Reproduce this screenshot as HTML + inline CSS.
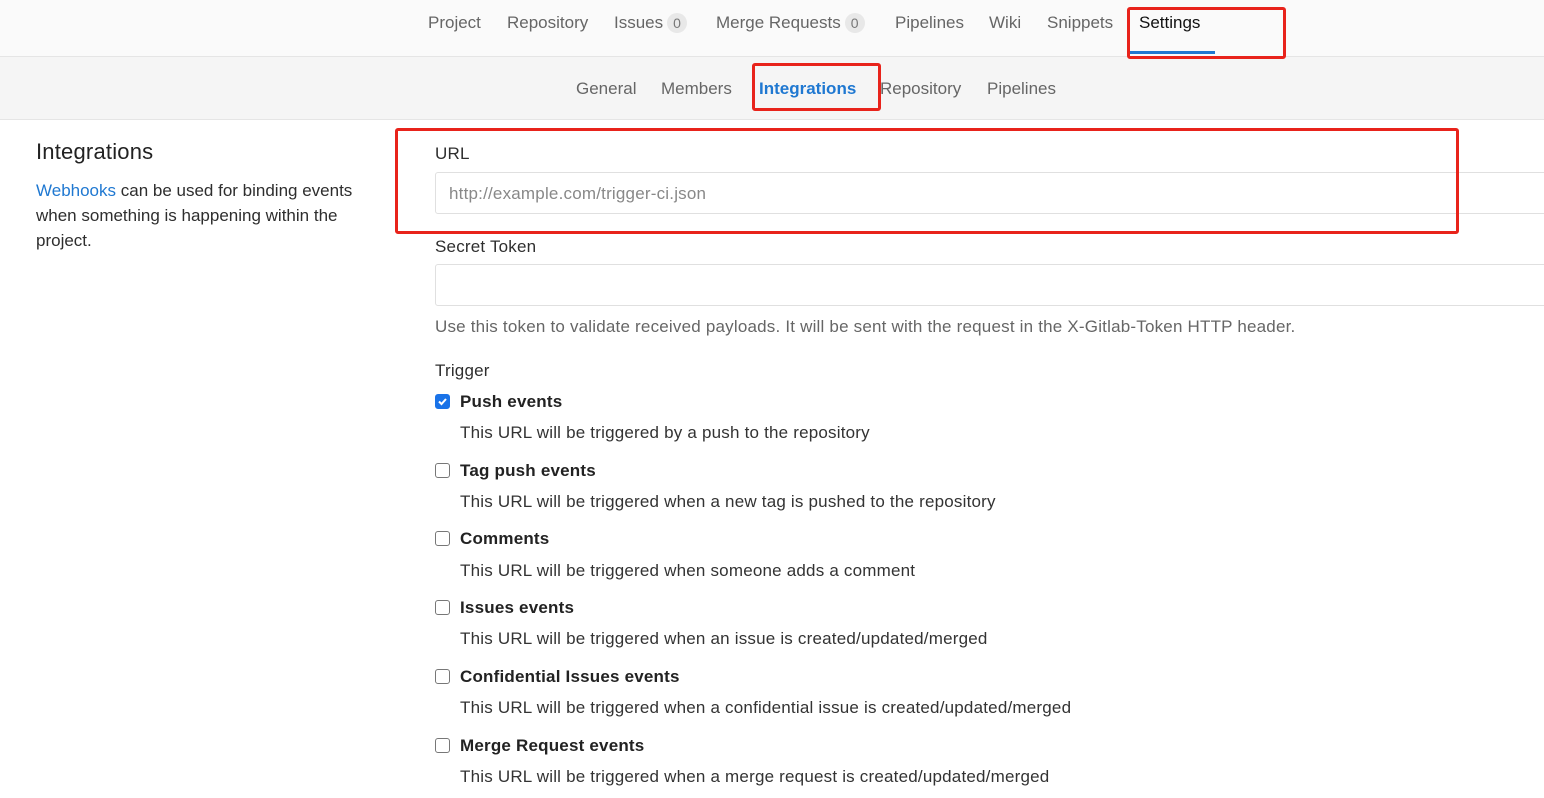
<!DOCTYPE html>
<html><head><style>
body{margin:0;width:1544px;height:798px;overflow:hidden;background:#fff;font-family:"Liberation Sans",sans-serif;font-size:17px;color:#2e2e2e;position:relative;letter-spacing:0.2px}
.a{position:absolute;white-space:nowrap}
.n{color:#666}
.badge{display:inline-block;background:#e8e8e8;border-radius:10px;padding:0 6px;font-size:14px;color:#777;line-height:20px;margin-left:4px}
.red{position:absolute;border:3px solid #e8231b;border-radius:3px;box-sizing:border-box}
.cb{position:absolute;left:435px;width:15px;height:15px;border:1px solid #777;border-radius:3px;box-sizing:border-box;background:#fff}
.lbl{left:460px;font-weight:bold;color:#222}
.d{left:460px;color:#333}
.inp{position:absolute;left:435px;width:1120px;height:42px;border:1px solid #e0e0e0;border-radius:3px;box-sizing:border-box}
</style></head><body>
<div class="a" style="left:0;top:0;width:1544px;height:56px;background:#fafafa;border-bottom:1px solid #e5e5e5"></div>
<div class="a" style="left:0;top:57px;width:1544px;height:62px;background:#f5f5f5;border-bottom:1px solid #e5e5e5"></div>
<div class="a n" style="left:428px;top:13px;letter-spacing:0">Project</div>
<div class="a n" style="left:507px;top:13px;letter-spacing:0">Repository</div>
<div class="a n" style="left:614px;top:13px;letter-spacing:0">Issues<span class="badge">0</span></div>
<div class="a n" style="left:716px;top:13px;letter-spacing:0">Merge Requests<span class="badge">0</span></div>
<div class="a n" style="left:895px;top:13px;letter-spacing:0">Pipelines</div>
<div class="a n" style="left:989px;top:13px;letter-spacing:0">Wiki</div>
<div class="a n" style="left:1047px;top:13px;letter-spacing:0">Snippets</div>
<div class="a" style="left:1139px;top:13px;color:#111;letter-spacing:0">Settings</div>
<div class="a" style="left:1130px;top:51px;width:85px;height:3px;background:#1f78d1"></div>
<div class="red" style="left:1127px;top:7px;width:159px;height:52px"></div>
<div class="a n" style="left:576px;top:79px;letter-spacing:0">General</div>
<div class="a n" style="left:661px;top:79px;letter-spacing:0">Members</div>
<div class="a" style="left:759px;top:79px;color:#1f78d1;font-weight:bold;letter-spacing:0">Integrations</div>
<div class="a n" style="left:880px;top:79px;letter-spacing:0">Repository</div>
<div class="a n" style="left:987px;top:79px;letter-spacing:0">Pipelines</div>
<div class="red" style="left:752px;top:63px;width:129px;height:48px"></div>
<div class="a" style="left:36px;top:139px;font-size:22px;color:#222;font-weight:500">Integrations</div>
<div class="a" style="left:36px;top:178px;line-height:25px;white-space:normal;width:340px;letter-spacing:0"><span style="color:#1f78d1">Webhooks</span> can be used for binding events when something is happening within the project.</div>
<div class="a" style="left:435px;top:144px">URL</div>
<div class="inp" style="top:172px"></div>
<div class="a" style="left:449px;top:184px;color:#888">http://example.com/trigger-ci.json</div>
<div class="red" style="left:395px;top:128px;width:1064px;height:106px"></div>
<div class="a" style="left:435px;top:237px">Secret Token</div>
<div class="inp" style="top:264px"></div>
<div class="a" style="left:435px;top:317px;color:#666">Use this token to validate received payloads. It will be sent with the request in the X-Gitlab-Token HTTP header.</div>
<div class="a" style="left:435px;top:361px">Trigger</div>
<div class="cb" style="top:394px;background:#1a73e8;border-color:#1a73e8"><svg width="13" height="13" viewBox="0 0 13 13" style="position:absolute;left:0;top:0"><path d="M3 6.5l2.5 2.5 4.5-5" stroke="#fff" stroke-width="2" fill="none"/></svg></div>
<div class="a lbl" style="top:392px">Push events</div>
<div class="a d" style="top:423px">This URL will be triggered by a push to the repository</div>
<div class="cb" style="top:463px"></div>
<div class="a lbl" style="top:461px">Tag push events</div>
<div class="a d" style="top:492px">This URL will be triggered when a new tag is pushed to the repository</div>
<div class="cb" style="top:531px"></div>
<div class="a lbl" style="top:529px">Comments</div>
<div class="a d" style="top:561px">This URL will be triggered when someone adds a comment</div>
<div class="cb" style="top:600px"></div>
<div class="a lbl" style="top:598px">Issues events</div>
<div class="a d" style="top:629px">This URL will be triggered when an issue is created/updated/merged</div>
<div class="cb" style="top:669px"></div>
<div class="a lbl" style="top:667px">Confidential Issues events</div>
<div class="a d" style="top:698px">This URL will be triggered when a confidential issue is created/updated/merged</div>
<div class="cb" style="top:738px"></div>
<div class="a lbl" style="top:736px">Merge Request events</div>
<div class="a d" style="top:767px">This URL will be triggered when a merge request is created/updated/merged</div>
</body></html>
